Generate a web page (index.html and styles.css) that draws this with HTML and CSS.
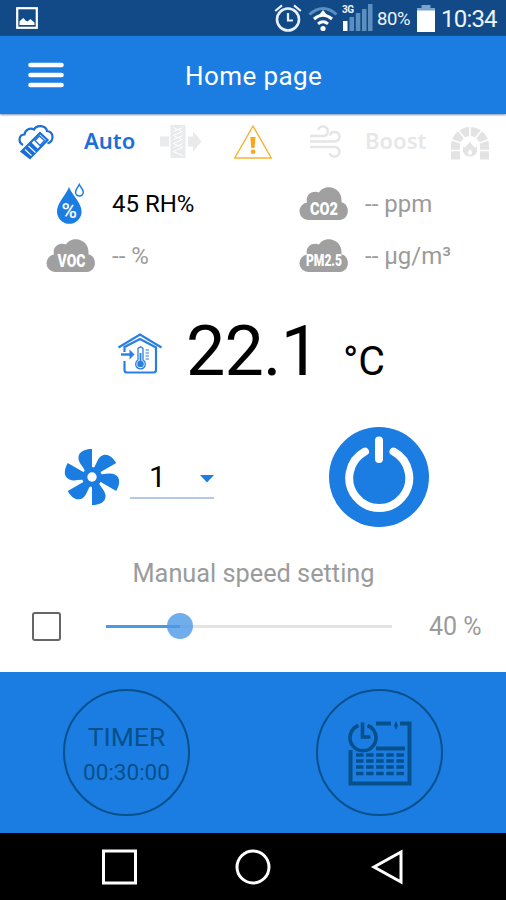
FILE: index.html
```html
<!DOCTYPE html>
<html lang="en">
<head>
    <meta charset="UTF-8">
    <meta name="viewport" content="width=device-width, initial-scale=1.0">
    <title>Home page</title>
    <link rel="stylesheet" href="styles.css">
</head>
<body>
    <div class="status-bar">
        <svg class="picture-icon" width="22" height="22" viewBox="0 0 22 22">
            <rect x="1.2" y="1.2" width="19.6" height="19.6" fill="none" stroke="#fff" stroke-width="2.2"/>
            <path d="M3.500 18v-3.500l2.500-2.500 1.500-1 2 2.500 2 1 3-2.500 1.500 1.500 2.500 2V18z" fill="#fff"/>
        </svg>
        <svg class="alarm-icon" width="28" height="28" viewBox="0 0 28 28" fill="none" stroke="#e9f1fa" stroke-width="2.6">
            <circle cx="14" cy="15.500" r="11"/>
            <path d="M1.200 7L8 1.400M26.800 7L20 1.400M14 9v7.500h5" stroke-width="2.200"/>
        </svg>
        <svg class="wifi-icon" width="30" height="26" viewBox="0 0 30 26" fill="none">
            <path d="M1.500 8.500Q15-3.500 28.500 8.500" stroke="#5c8fc0" stroke-width="3"/>
            <path d="M6 13Q15 5.500 24 13M10 17.800Q15 13.800 20 17.800" stroke="#fff" stroke-width="3"/>
            <path d="M11 9l4-5 4 5z" fill="#fff"/>
            <circle cx="15" cy="22.500" r="2.600" fill="#fff"/>
        </svg>
        <div class="signal">
            <span class="network">3G</span>
            <svg width="31" height="28" viewBox="0 0 31 28">
                <path d="M1 17h4.500v10H1z" fill="#fff"/>
                <path d="M7.500 13H12v14H7.500zM13.800 9h4.500v18h-4.500zM20 5h4.500v22H20zM26 0h4.500v27H26z" fill="#5c8fc0"/>
            </svg>
        </div>
        <span class="battery-level">80%</span>
        <svg class="battery-icon" width="18" height="28" viewBox="0 0 18 28">
            <path d="M4.500 0h9v3H18v3H0V3h4.500z" fill="#7ba3cb"/>
            <path d="M0 5.500h18V27H0z" fill="#fff"/>
        </svg>
        <span class="clock">10:34</span>
    </div>

    <header class="app-bar">
        <svg class="menu-icon" width="36" height="26" viewBox="0 0 36 26" stroke="#fff" stroke-width="4.600" stroke-linecap="round">
            <path d="M2.500 3h31M2.500 13h31M2.500 23h31"/>
        </svg>
        <h1>Home page</h1>
    </header>

    <main>
        <div class="modes">
            <svg class="mode-remote" width="36" height="36" viewBox="0 0 36 36" fill="none" stroke="#1b6fd6" stroke-width="2.200">
                <path d="M5 21C-.5 18 1 10.500 6.500 10.500C7 5 13 3.500 16 5.500C19 0 28 1.500 29 7C36 8 36.500 17 29.500 19.500" />
                <path d="M3.500 27.500L22 9L29.500 16L12 34z" fill="#fff"/>
                <path d="M3.500 27.500L13 18l7.500 7.500L12 34z" fill="#1b6fd6" stroke="none"/>
                <path d="M7 25.500l6.500 6M10.500 22l7 6.500" stroke="#fff" stroke-width="1.100"/>
                <path d="M17 16.500l4.500-4.500 5 4.500-4.500 5z" stroke-width="1.300"/>
            </svg>
            <span class="mode-auto">Auto</span>
            <svg class="mode-filter" width="42" height="36" viewBox="0 0 42 36" fill="#e9eaec">
                <path d="M0 12.500h9v10H0zM28 12.500h5V7l8.500 10.500L33 28v-5.500h-5z"/>
                <path d="M10.500 1h15v33h-15z"/>
                <path d="M13 3.500l10 4-10 4 10 4-10 4 10 4-10 4 10 4M23 3.500l-10 4M23 11.500l-10 4M23 19.500l-10 4" fill="none" stroke="#fff" stroke-width="1"/>
            </svg>
            <svg class="mode-warning" width="40" height="36" viewBox="0 0 40 36">
                <path d="M20 2L38.300 34H1.700z" fill="none" stroke="#f9b233" stroke-width="1.500" stroke-linejoin="round"/>
                <path d="M17.300 13h5.200l-1 11h-3.200z" fill="#f9a61a"/>
                <circle cx="20" cy="27.800" r="2.300" fill="#f9a61a"/>
            </svg>
            <svg class="mode-wind" width="34" height="36" viewBox="0 0 34 36" fill="none" stroke="#e5e5e6" stroke-width="2.400">
                <path d="M2 12h14c5-1 5-8.500 0-9.500c-3.500-.5-5.500 1.500-5.500 3.500M2 17.500h25c6-1 6-9 0-9.500c-3.500 0-5 1.500-5 3.500M2 23h25c6 1 6 8.500 0 9.500c-3.500 0-5-1.500-5-3.500"/>
            </svg>
            <span class="mode-boost">Boost</span>
            <svg class="mode-fireplace" width="38" height="34" viewBox="0 0 38 34">
                <path d="M4.500 32.500V19a14.500 14.500 0 0 1 29 0v13.500" fill="none" stroke="#e3e3e4" stroke-width="9"/>
                <path d="M0 23.500h10M28 23.500h10M0 12.500l11 4M38 12.500l-11 4M7 3l8 10M31 3l-8 10M19 0v10" stroke="#fff" stroke-width="1.600"/>
                <path d="M19 14c1 4 4 4.500 5 7l1.500-2c2 6-1 10.500-6.500 10.500s-8.500-4.500-6.500-10.500l2 2c0-3 3.500-3.500 4.500-7z" fill="#e3e3e4"/>
                <path d="M19 22c3 3 2 6 0 6s-3-3 0-6z" fill="#fff"/>
            </svg>
        </div>

        <div class="sensors">
            <div class="sensor active">
                <svg width="50" height="42" viewBox="0 0 50 42">
                    <path d="M23 4C20 12 11 20 11 28.500a12.300 12.300 0 0 0 24.600 0C35.600 20 26 12 23 4z" fill="#1b7de2"/>
                    <path d="M33.300 1.500c-1.500 3-3.800 5-3.800 7.600a3.900 3.900 0 0 0 7.800 0C37.300 6.500 34.800 4.500 33.300 1.500z" fill="#fff" stroke="#1b7de2" stroke-width="1.500"/>
                    <text class="percent-label" x="23.300" y="34.500">%</text>
                </svg>
                <span>45 RH%</span>
            </div>
            <div class="sensor">
                <svg width="50" height="34" viewBox="0 0 50 34">
                    <path class="cloud" d="M9 33a8.800 8.800 0 0 1-1-17.500C6 8 13 3 20 5.500C24-1 32-.5 36 2c5 2 7 8 6.500 13.300C51.500 17.500 51 32 41 33z"/>
                    <text class="cloud-label" x="11.500" y="27.500" textLength="28" lengthAdjust="spacingAndGlyphs">VOC</text>
                </svg>
                <span>-- %</span>
            </div>
            <div class="sensor">
                <svg width="50" height="34" viewBox="0 0 50 34">
                    <path class="cloud" d="M9 33a8.800 8.800 0 0 1-1-17.500C6 8 13 3 20 5.500C24-1 32-.5 36 2c5 2 7 8 6.500 13.300C51.500 17.500 51 32 41 33z"/>
                    <text class="cloud-label" x="11" y="27.500" textLength="28" lengthAdjust="spacingAndGlyphs">CO2</text>
                </svg>
                <span>-- ppm</span>
            </div>
            <div class="sensor">
                <svg width="50" height="34" viewBox="0 0 50 34">
                    <path class="cloud" d="M9 33a8.800 8.800 0 0 1-1-17.500C6 8 13 3 20 5.500C24-1 32-.5 36 2c5 2 7 8 6.500 13.300C51.500 17.500 51 32 41 33z"/>
                    <text class="cloud-label small" x="7" y="27" textLength="36" lengthAdjust="spacingAndGlyphs">PM2.5</text>
                </svg>
                <span>-- µg/m³</span>
            </div>
        </div>

        <div class="temperature">
            <svg class="house-icon" width="46" height="42" viewBox="0 0 46 42" fill="none" stroke="#2a7fe4" stroke-width="2.200">
                <path d="M1.500 14.500L23 1.500l21.500 13"/>
                <path d="M7.500 19v-5L23 6l16 8.500V37q0 2.500-2.500 2.500H10Q7.500 39.500 7.500 37v-9"/>
                <path d="M4 21.500h10" stroke-width="2.400"/>
                <path d="M12.500 16.500l5 5-5 5z" fill="#2a7fe4" stroke="none"/>
                <path d="M21 27V15.500q2.500-3 5 0V27a4.800 4.800 0 1 1-5 0z" stroke-width="1.300"/>
                <circle cx="23.500" cy="31" r="3.300" fill="#2a7fe4" stroke="none"/>
                <path d="M23.500 20v10" stroke-width="1.800"/>
                <path d="M28.500 17h3.500M28.500 20h3.500M28.500 23h3.500M28.500 26h3.500" stroke-width="1.200"/>
            </svg>
            <span class="temp-value">22.1</span>
            <span class="temp-unit">°C</span>
        </div>

        <div class="controls">
            <svg class="fan-icon" width="56" height="58" viewBox="-28 -29 56 58" fill="#1b7de2">
                <defs>
                    <path id="blade" d="M0-28C-7-28-14-25.500-13.500-18.500C-13-13-8-10-6-4L0 0Z"/>
                </defs>
                <use href="#blade"/>
                <use href="#blade" transform="rotate(60)"/>
                <use href="#blade" transform="rotate(120)"/>
                <use href="#blade" transform="rotate(180)"/>
                <use href="#blade" transform="rotate(240)"/>
                <use href="#blade" transform="rotate(300)"/>
                <circle r="10"/>
                <circle r="4.700" fill="#fff"/>
            </svg>
            <div class="speed-select">
                <span>1</span>
                <svg class="dropdown-arrow" width="14" height="8" viewBox="0 0 14 8"><path d="M0 0h14L7 7.500z" fill="#1b7de2"/></svg>
            </div>
            <svg class="power-button" width="100" height="100" viewBox="0 0 100 100" fill="none" stroke="#fff" stroke-width="8" stroke-linecap="round">
                <circle cx="50" cy="50" r="50" fill="#1b7de2" stroke="none"/>
                <path d="M36 24.600A30 30 0 1 0 64.500 24.600M50 13.500V32"/>
            </svg>
        </div>

        <div class="manual-title">Manual speed setting</div>
        <div class="manual">
            <span class="checkbox"></span>
            <div class="slider">
                <span class="slider-fill"></span>
                <span class="slider-thumb"></span>
            </div>
            <span class="manual-value">40 %</span>
        </div>
    </main>

    <footer class="actions">
        <div class="round-button">
            <span class="timer-title">TIMER</span>
            <span class="timer-value">00:30:00</span>
        </div>
        <div class="round-button">
            <svg width="64" height="66" viewBox="0 0 64 66" fill="none" stroke="#06508c" stroke-width="4">
                <path d="M10.500 5.500A13 13 0 1 0 19.500 5.500M14.500 2.500V17h8" stroke-width="3.600"/>
                <path d="M2.500 30v33.500h59V3.500H52M28 3.500h15M28 28.500h29"/>
                <path d="M48 1l2 4.500-2 4.500-2-4.500z" fill="#06508c" stroke="none"/>
                <path d="M8 35h48M8 41h48M8 47h48M8 53.500h48" stroke-dasharray="7.500 2.600" stroke-width="3.600"/>
            </svg>
        </div>
    </footer>

    <nav class="nav-bar">
        <svg width="36" height="36" viewBox="0 0 36 36" fill="none" stroke="#fff" stroke-width="3"><path d="M2.500 2h32v32h-32z"/></svg>
        <svg width="36" height="36" viewBox="0 0 36 36" fill="none" stroke="#fff" stroke-width="3"><circle cx="18" cy="18" r="16"/></svg>
        <svg width="36" height="36" viewBox="0 0 36 36" fill="none" stroke="#fff" stroke-width="3"><path d="M32 3v30L5 18z"/></svg>
    </nav>
</body>
</html>
```

FILE: styles.css
```css
* {
    box-sizing: border-box;
}
body {
    margin: 0;
    width: 506px;
    height: 900px;
    overflow: hidden;
    display: flex;
    flex-direction: column;
    font-family: Roboto, "Liberation Sans", sans-serif;
    background-color: #fff;
}
svg {
    display: block;
    flex: none;
    overflow: visible;
}
span {
    white-space: nowrap;
}
.status-bar {
    height: 36px;
    flex: none;
    display: flex;
    align-items: center;
    padding-left: 16px;
    background-color: #124a87;
    color: #eef4fb;
}
.alarm-icon {
    margin-left: 236px;
}
.wifi-icon {
    margin-left: 6px;
    margin-top: 2px;
}
.signal {
    position: relative;
    margin-left: 4px;
}
.network {
    position: absolute;
    left: 0;
    top: 0;
    font-size: 10px;
    font-weight: bold;
    letter-spacing: -0.5px;
    line-height: 12px;
}
.battery-level {
    width: 40px;
    margin-left: 4px;
    font-size: 18.5px;
    letter-spacing: -0.4px;
    margin-top: 2px;
}
.battery-icon {
    margin-top: 1px;
}
.clock {
    margin-left: 6px;
    margin-top: 1px;
    font-size: 24px;
    letter-spacing: -0.8px;
}
.app-bar {
    height: 78px;
    flex: none;
    display: flex;
    align-items: center;
    padding-left: 28px;
    background-color: #1b7de2;
    box-shadow: 0 1px 2px #7893b4;
    color: #fff;
}
h1 {
    margin: 1px 0 0 121px;
    font-size: 26px;
    font-weight: 400;
    letter-spacing: 0.4px;
}
main {
    height: 558px;
    flex: none;
}
.modes {
    height: 56px;
    display: flex;
    align-items: center;
    padding-left: 18px;
    font-family: "Noto Sans", sans-serif;
    font-size: 22px;
    font-weight: 600;
}
.mode-auto {
    width: 50px;
    margin-left: 30px;
    margin-top: -5px;
    color: #1b6fd6;
}
.mode-filter {
    margin-left: 26px;
}
.mode-warning {
    margin-left: 31px;
}
.mode-wind {
    margin-left: 35px;
}
.mode-boost {
    width: 62px;
    margin-left: 23px;
    margin-top: -5px;
    color: #e7e7e8;
}
.mode-fireplace {
    margin-left: 24px;
    margin-top: 3px;
}
.sensors {
    display: grid;
    grid-template-columns: 253px 253px;
    grid-template-rows: 52px 52px;
    grid-auto-flow: column;
    padding-top: 8px;
}
.sensor {
    display: flex;
    align-items: center;
    gap: 16px;
    padding-left: 46px;
    font-size: 24px;
    color: #9b9b9b;
}
.sensor.active {
    color: #000;
}
.cloud {
    fill: #a0a0a0;
}
.cloud-label {
    font-size: 18px;
    font-weight: 900;
    fill: #fff;
}
.cloud-label.small {
    font-size: 17px;
}
.percent-label {
    font-size: 21px;
    font-weight: 500;
    text-anchor: middle;
    fill: #fff;
}
.temperature {
    height: 110px;
    display: flex;
    align-items: baseline;
    margin-top: 20px;
    padding-left: 117px;
    color: #000;
}
.house-icon {
    margin-bottom: -1px;
}
.temp-value {
    width: 136px;
    margin-left: 23px;
    font-size: 70px;
    letter-spacing: -0.8px;
    line-height: 98px;
}
.temp-unit {
    margin-left: 21px;
    font-size: 41px;
}
.controls {
    height: 130px;
    display: flex;
    align-items: center;
    padding-left: 64px;
}
.speed-select {
    width: 84px;
    height: 44px;
    margin-left: 10px;
    display: flex;
    align-items: center;
    justify-content: space-between;
    padding-left: 19px;
    border-bottom: 2px solid #b4c8ec;
    font-size: 30px;
}
.dropdown-arrow {
    margin-top: 5px;
}
.power-button {
    margin-left: 115px;
}
.manual-title {
    height: 34px;
    margin-top: 15px;
    line-height: 34px;
    padding-left: 1px;
    text-align: center;
    font-size: 25.3px;
    color: #9b9b9b;
}
.manual {
    height: 71px;
    display: flex;
    align-items: center;
    padding-left: 32px;
}
.checkbox {
    width: 29px;
    height: 29px;
    border: 2.5px solid #666;
    border-radius: 3px;
}
.slider {
    position: relative;
    width: 286px;
    height: 3px;
    margin-left: 45px;
    background-color: #e4e4e4;
}
.slider-fill {
    display: block;
    width: 74px;
    height: 3px;
    background-color: #4b98e8;
}
.slider-thumb {
    position: absolute;
    left: 61px;
    top: -12px;
    width: 26px;
    height: 26px;
    border-radius: 50%;
    background-color: rgba(75, 152, 232, 0.8);
}
.manual-value {
    margin-left: 37px;
    font-size: 25px;
    color: #9b9b9b;
}
.actions {
    height: 161px;
    flex: none;
    display: flex;
    align-items: center;
    gap: 126px;
    padding-left: 63px;
    background-color: #1b7de2;
    color: #06508c;
}
.round-button {
    width: 127px;
    height: 127px;
    display: flex;
    flex-direction: column;
    align-items: center;
    justify-content: center;
    border: 2px solid #06508c;
    border-radius: 50%;
}
.timer-title {
    padding-top: 3px;
    font-size: 26.5px;
    line-height: 36px;
}
.timer-value {
    font-size: 22.5px;
    line-height: 34px;
}
.nav-bar {
    height: 67px;
    flex: none;
    display: flex;
    align-items: center;
    justify-content: center;
    gap: 98px;
    background-color: #000;
}
```
